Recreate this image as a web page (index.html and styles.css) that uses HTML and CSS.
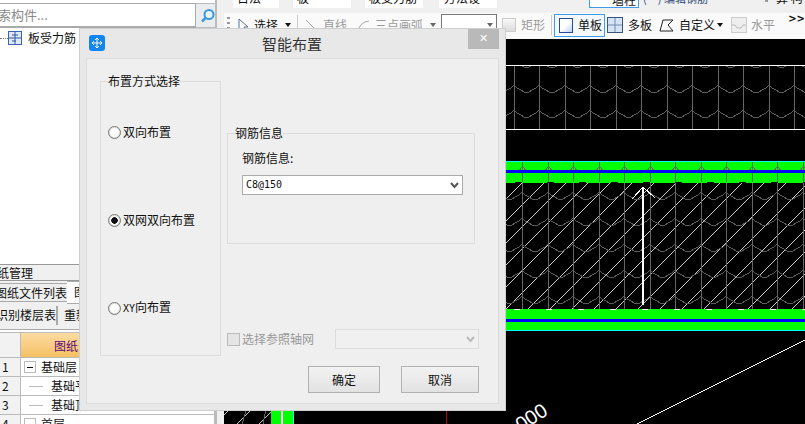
FILE: index.html
```html
<!DOCTYPE html>
<html lang="zh-CN">
  <head>
    <meta charset="UTF-8" />
    <title>智能布置</title>
    <link rel="stylesheet" href="styles.css">
  </head>
  <body>
    <div class="app">
      <!-- left panel -->
      <aside class="side">
        <div class="search">
          <div class="search-box"><span>索构件...</span></div>
          <div class="search-btn">
            <svg width="18" height="18" viewBox="0 0 18 18"><circle cx="10" cy="7.5" r="4.5" fill="#e8f4fc" stroke="#3f97d8" stroke-width="2"/><path d="M6.5 11 3 14.5" stroke="#3f97d8" stroke-width="2.5"/></svg>
          </div>
        </div>
        <div class="tree">
          <div class="tree-row">
            <span class="dots"></span>
            <svg width="14" height="14" viewBox="0 0 14 14"><rect x=".5" y=".5" width="13" height="13" fill="#dfe9f7" stroke="#3a62b0"/><path d="M7 1v12M1 7h12M4 4h6M4 10h4" stroke="#2d55a8" fill="none"/></svg>
            <span>板受力筋</span>
          </div>
        </div>
        <div class="panel-title"><span>纸管理</span></div>
        <div class="tabs">
          <div class="tab"><span>图纸文件列表</span></div>
          <div class="tab tab-on">图纸</div>
        </div>
        <div class="actions">
          <div class="action a-first"><span>识别楼层表</span></div>
          <div class="action">重新</div>
        </div>
        <div class="sheet">
          <div class="sheet-row sheet-head"><div class="num"></div><div class="cell">图纸</div></div>
          <div class="sheet-row"><div class="num">1</div><div class="cell"><i class="box"></i>基础层</div></div>
          <div class="sheet-row"><div class="num">2</div><div class="cell sub">基础平</div></div>
          <div class="sheet-row"><div class="num">3</div><div class="cell sub">基础顶</div></div>
          <div class="sheet-row"><div class="num">4</div><div class="cell"><i class="box"></i>首层</div></div>
        </div>
      </aside>
      <div class="splitter"></div>

      <main class="work">
        <div class="bar-top">
          <div class="combo"><span>日法</span></div>
          <div class="combo c2"><span>板</span></div>
          <div class="combo c2"><span>板受力筋</span></div>
          <div class="combo c3"><span>方法设</span></div>
          <div class="wall">墙柱</div>
          <div class="edit">(·) 编辑钢筋</div>
          <div class="grip"></div>
          <div class="calc">算 构</div>
        </div>
        <div class="bar-tools">
          <div class="grip"></div>
          <svg class="t-pick" width="11" height="15" viewBox="0 0 11 15"><path d="M1 1v12l3-3 2 4 2-1-2-4h4z" fill="#fff" stroke="#5a6f96"/></svg>
          <span class="t-sel">选择</span>
          <i class="caret"></i>
          <i class="sep s1"></i>
          <svg class="t-line" width="13" height="13" viewBox="0 0 13 13"><path d="M1 1l11 11" stroke="#aaa"/></svg>
          <span class="off t-gap">直线</span>
          <svg class="t-arc" width="13" height="13" viewBox="0 0 13 13"><path d="M1 12Q3 3 12 2" stroke="#aaa" fill="none"/></svg>
          <span class="off t-gap">三点画弧</span>
          <i class="caret off-c"></i>
          <div class="pick"><i class="caret off-d"></i></div>
          <i class="ico-rect"></i>
          <span class="off t-rect">矩形</span>
          <i class="sep s2"></i>
          <div class="slab-on">
            <i class="ico-slab"></i><span>单板</span>
          </div>
          <svg class="t-multi" width="16" height="16" viewBox="0 0 16 16"><rect x=".5" y=".5" width="15" height="15" fill="#d5e3f3" stroke="#38557f"/><path d="M8 1v14M1 8h14" stroke="#6f8db5"/></svg>
          <span class="t-gap">多板</span>
          <svg class="t-custom" width="15" height="13" viewBox="0 0 15 13"><path d="M1 12 4 1h10L9 6l5 6z" fill="none" stroke="#222"/></svg>
          <span class="t-gap">自定义</span>
          <i class="caret c-custom"></i>
          <svg class="t-flat" width="16" height="16" viewBox="0 0 16 16"><rect x=".5" y=".5" width="15" height="15" fill="#eee" stroke="#ccc"/><path d="M1 8h3l2 3h4l2-3h3" stroke="#bbb" fill="none"/></svg>
          <span class="off t-flat-text">水平</span>
          <span class="more">&gt;&gt;</span>
        </div>

        <svg class="cad" viewBox="224 39 581 385" shape-rendering="crispEdges">
          <defs>
            <pattern id="vTop" x="514" y="0" width="51" height="10" patternUnits="userSpaceOnUse"><path d="M.5 0v10M25.5 0v10" stroke="#666"/></pattern>
            <pattern id="scTop" x="514" y="80" width="51" height="25" patternUnits="userSpaceOnUse"><path d="M0 5l3 3 4 2 3 2h5l3-2 4-2 3-3 3 3 4 2 3 2h6l3-2 4-2 3-3" fill="none" stroke="#5c5c5c"/></pattern>
            <pattern id="vMid" x="522" y="0" width="51" height="10" patternUnits="userSpaceOnUse"><path d="M.5 0v10M26.5 0v10" stroke="#666"/></pattern>
            <pattern id="scMid" x="522" y="187" width="51" height="26" patternUnits="userSpaceOnUse"><path d="M0 5l3 3 4 2 3 2h6l3-2 4-2 3-3 3 3 4 2 3 2h5l3-2 4-2 3-3" fill="none" stroke="#5c5c5c"/></pattern>
            <pattern id="hatch" x="236" y="183" width="22" height="22" patternUnits="userSpaceOnUse"><path d="M0 22 22 0" stroke="#ccc"/></pattern>
            <pattern id="mark" x="516" y="162" width="51" height="20" patternUnits="userSpaceOnUse"><path d="M6.5 0v20M32.5 0v20M1.5 11 6.5 4 11.5 11M27.5 11 32.5 4 37.5 11" fill="none" stroke="#666"/></pattern>
            <pattern id="dashW" x="514" y="0" width="32" height="2" patternUnits="userSpaceOnUse"><rect width="6" height="2" fill="#fff"/></pattern>
            <pattern id="dashK" x="515" y="0" width="32" height="2" patternUnits="userSpaceOnUse"><rect width="7" height="2" fill="#000"/></pattern>
          </defs>
          <rect x="224" y="39" width="581" height="385" fill="#000"/>

          <!-- tile band -->
          <rect x="224" y="66" width="581" height="63" fill="url(#vTop)"/>
          <rect x="224" y="66" width="581" height="63" fill="url(#scTop)"/>
          <path d="M224 65.5H805M224 129.5H805" stroke="#fff"/>

          <!-- beam top -->
          <rect x="224" y="161" width="581" height="1" fill="#0ff"/>
          <rect x="224" y="162" width="581" height="21" fill="#0f0"/>
          <rect x="224" y="162" width="581" height="20" fill="url(#mark)"/>
          <rect x="224" y="170" width="581" height="3" fill="#00f"/>
          <rect x="224" y="182" width="581" height="1" fill="url(#dashK)"/>

          <!-- hatched slab -->
          <rect x="224" y="183" width="581" height="126" fill="url(#hatch)"/>
          <rect x="224" y="183" width="581" height="126" fill="url(#vMid)"/>
          <rect x="224" y="183" width="581" height="126" fill="url(#scMid)"/>
          <path d="M643 187V305" stroke="#fff" stroke-width="2"/>
          <path d="M643 187 632 199M643 187 655 198" stroke="#fff" fill="none"/>

          <!-- beam bottom -->
          <rect x="224" y="309" width="581" height="21" fill="#0f0"/>
          <rect x="224" y="309" width="581" height="1" fill="url(#dashW)"/>
          <rect x="224" y="319" width="581" height="3" fill="#00f"/>
          <rect x="224" y="330" width="581" height="1" fill="#0ff"/>

          <!-- lower part, mostly behind the dialog -->
          <rect x="224" y="405" width="47" height="19" fill="url(#hatch)"/>
          <path d="M245 405v9l-3 10M265 405v9l-2 10" fill="none" stroke="#666"/>
          <rect x="271" y="405" width="10" height="19" fill="#0f0"/>
          <rect x="281" y="405" width="2" height="19" fill="#fff"/>
          <rect x="283" y="405" width="10" height="19" fill="#0f0"/>
          <rect x="293" y="405" width="1" height="19" fill="#0ff"/>
          <path d="M446.500 405V424" stroke="#a01010"/>
          <path d="M805 340 637 424" stroke="#fff"/>
          <text x="521" y="432" transform="rotate(-33 521 432)" class="dim" shape-rendering="auto">000</text>
        </svg>
      </main>

      <!-- dialog -->
      <section class="dialog">
        <header class="dialog-head">
          <svg class="dialog-ico" width="16" height="16" viewBox="0 0 16 16"><rect width="16" height="16" rx="3" fill="#1186f0"/><path d="M8 3v10M3 8h10M6 5l2-2 2 2M6 11l2 2 2-2M5 6 3 8l2 2M11 6l2 2-2 2" stroke="#fff" fill="none"/></svg>
          <h1>智能布置</h1>
          <button class="close">✕</button>
        </header>
        <div class="dialog-body">
          <div class="columns">
            <fieldset class="group mode">
              <legend>布置方式选择</legend>
              <label class="radio"><input type="radio" name="mode" /><span>双向布置</span></label>
              <label class="radio"><input type="radio" name="mode" checked /><span>双网双向布置</span></label>
              <label class="radio"><input type="radio" name="mode" /><span><b class="latin">XY</b>向布置</span></label>
            </fieldset>
            <div class="right">
              <fieldset class="group info">
                <legend>钢筋信息</legend>
                <div class="field-label">钢筋信息:</div>
                <div class="select">
                  <span class="latin">C8@150</span>
                  <svg width="9" height="7" viewBox="0 0 9 7"><path d="M1 1l3.500 4L8 1" fill="none" stroke="#555" stroke-width="2"/></svg>
                </div>
              </fieldset>
              <div class="ref">
                <label class="check"><input type="checkbox" disabled /><span>选择参照轴网</span></label>
                <div class="select select-off">
                  <svg width="9" height="7" viewBox="0 0 9 7"><path d="M1 1l3.500 4L8 1" fill="none" stroke="#bbb" stroke-width="2"/></svg>
                </div>
              </div>
            </div>
          </div>
          <div class="buttons">
            <button class="btn">确定</button>
            <button class="btn">取消</button>
          </div>
        </div>
      </section>
    </div>
  </body>
</html>
```

FILE: styles.css
```css
* {
  box-sizing: border-box;
}
html,
body {
  margin: 0;
  height: 100%;
  overflow: hidden;
}
body {
  font-family: "Noto Sans CJK SC", "Liberation Sans", sans-serif;
  font-size: 12px;
  line-height: 14px;
  color: #111;
  background: #f0f0f0;
}
.app {
  position: relative;
  display: flex;
  width: 805px;
  height: 424px;
  overflow: hidden;
}

/* ---------- left panel ---------- */
.side {
  width: 215px;
  flex: none;
  display: flex;
  flex-direction: column;
  background: #fff;
}
.search {
  display: flex;
  width: 221px;
  height: 25px;
  margin-top: 3px;
  flex: none;
}
.search-box {
  width: 196px;
  border: 1px solid #aaa;
  border-width: 1px 1px 2px 0;
  background: #fff;
  color: #8a8a8a;
  font-size: 13px;
  line-height: 21px;
  overflow: hidden;
  white-space: nowrap;
}
.search-box span {
  margin-left: -2px;
}
.search-btn {
  width: 25px;
  display: flex;
  align-items: center;
  justify-content: center;
  background: #e9edf0;
  border: 1px solid #bbb;
  border-left: 0;
}
.tree {
  flex: 1;
  padding-top: 2px;
}
.tree-row {
  display: flex;
  align-items: center;
  height: 16px;
}
.tree-row svg {
  margin-right: 6px;
}
.dots {
  width: 8px;
  border-top: 1px dotted #777;
}
.panel-title {
  height: 16px;
  flex: none;
  border-top: 1px solid #999;
  background: #f0f0f0;
  overflow: hidden;
  white-space: nowrap;
  font-size: 12px;
  line-height: 15px;
}
.panel-title span {
  margin-left: -3px;
}
.tabs {
  display: flex;
  align-items: flex-end;
  height: 24px;
  flex: none;
  background: #f0f0f0;
  border-top: 1px solid #999;
}
.tab {
  width: 68px;
  height: 19px;
  margin-bottom: 2px;
  border: 1px solid #aaa;
  border-left: 0;
  overflow: hidden;
  white-space: nowrap;
  direction: rtl;
  text-align: left;
  line-height: 17px;
  background: #eee;
}
.tab-on {
  direction: ltr;
  height: 23px;
  margin: 0 0 0 -1px;
  padding-left: 7px;
  line-height: 20px;
  background: #fff;
  flex: 1;
}
.actions {
  display: flex;
  height: 26px;
  flex: none;
  padding: 2px 0 4px;
  background: #f0f0f0;
  border-bottom: 1px solid #aaa;
}
.action {
  padding: 0 6px;
  border-right: 2px solid #aaa;
  line-height: 18px;
  white-space: nowrap;
  overflow: hidden;
}
.a-first {
  width: 58px;
  padding: 0;
  direction: rtl;
}
.sheet {
  height: 92px;
  margin-top: 2px;
  flex: none;
  overflow: hidden;
  border-top: 1px solid #bbb;
}
.sheet-row {
  display: flex;
  height: 19px;
  border-bottom: 1px solid #bbb;
  line-height: 18px;
}
.sheet-head {
  height: 25px;
  line-height: 25px;
}
.num {
  width: 21px;
  padding-left: 2px;
  background: #f2f2f2;
  border-right: 1px solid #bbb;
}
.cell {
  flex: 1;
  display: flex;
  align-items: center;
  padding-left: 3px;
  border-right: 1px solid #bbb;
}
.sheet-head .cell {
  padding-left: 33px;
  color: #5b0a7a;
  background: linear-gradient(#fbdca3, #f4c061);
}
.sub {
  padding-left: 30px;
  border-left: 0;
  background: linear-gradient(#bbb, #bbb) 8px 9px / 14px 1px no-repeat;
}
.box {
  width: 12px;
  height: 12px;
  margin-right: 5px;
  border: 1px solid #bbb;
  background: linear-gradient(#111, #111) center / 6px 1px no-repeat;
}
.splitter {
  width: 9px;
  flex: none;
  background: #f0f0f0;
  border-left: 2px solid #bbb;
}

/* ---------- toolbars + drawing ---------- */
.work {
  flex: 1;
  min-width: 0;
  display: flex;
  flex-direction: column;
}
.bar-top {
  display: flex;
  align-items: flex-start;
  height: 13px;
  flex: none;
  overflow: hidden;
  padding-left: 9px;
  gap: 2px;
  background: #f0f0f0;
  white-space: nowrap;
}
.bar-top > div {
  margin-top: -9px;
}
.combo {
  width: 58px;
  height: 17px;
  padding-left: 4px;
  background: linear-gradient(#f0f0f0, #f0f0f0) right / 12px 100% no-repeat #fff;
}
.c2 {
  width: 70px;
}
.c3 {
  width: 70px;
  margin-left: 2px;
  padding-left: 5px;
}
.bar-top .wall {
  width: 50px;
  height: 17px;
  margin-top: -9px;
  margin-left: 78px;
  padding-left: 22px;
  padding-top: 1px;
  border: 1px solid #3f9bf0;
  background: #fff;
}
.bar-top .edit {
  width: 120px;
  margin-left: 2px;
  color: #34507c;
  font-size: 11px;
}
.bar-top .calc {
  margin-left: 6px;
}
.bar-top .grip {
  margin-top: 0;
  height: 5px;
}
.grip {
  width: 3px;
  height: 16px;
  flex: none;
  background: repeating-linear-gradient(#999 0 2px, transparent 2px 5px);
}
.bar-tools {
  display: flex;
  align-items: center;
  height: 26px;
  flex: none;
  padding: 0 0 2px 3px;
  background: #fafafa;
  white-space: nowrap;
  position: relative;
  color: #111;
}
.bar-tools > * {
  flex: none;
}
.off {
  color: #999;
}
.t-pick {
  margin-left: 8px;
}
.t-sel {
  margin-left: 5px;
}
.caret {
  width: 0;
  height: 0;
  border: 3px solid transparent;
  border-top: 4px solid #111;
  border-bottom: 0;
  margin-left: 7px;
}
.sep {
  width: 1px;
  height: 20px;
  background: #ccc;
}
.s1 {
  margin-left: 6px;
}
.s2 {
  margin-left: 6px;
}
.t-line {
  margin-left: 7px;
}
.t-gap {
  margin-left: 5px;
}
.t-arc {
  margin-left: 10px;
}
.off-c {
  border-top-color: #666;
  margin-left: 7px;
}
.pick {
  width: 56px;
  height: 22px;
  margin-left: 5px;
  border: 1px solid #777;
  background: #fff;
  display: flex;
  align-items: center;
  justify-content: flex-end;
  padding-right: 3px;
}
.off-d {
  border-top-color: #666;
}
.ico-rect {
  width: 14px;
  height: 14px;
  margin-left: 5px;
  border: 1px solid #ccc;
  background: linear-gradient(#f7f7f7, #ddd);
}
.t-rect {
  margin-left: 5px;
}
.slab-on {
  display: flex;
  align-items: center;
  width: 51px;
  height: 23px;
  margin-left: 2px;
  padding-left: 4px;
  gap: 5px;
  border: 1px solid #3f9bf0;
  background: #f4f9fe;
}
.ico-slab {
  width: 14px;
  height: 15px;
  border: 1px solid #2c4a9a;
  background: linear-gradient(135deg, #fff 50%, #bcd0ee);
}
.t-multi {
  margin-left: 2px;
}
.t-custom {
  margin-left: 7px;
}
.c-custom {
  margin-left: 2px;
}
.t-flat {
  margin-left: 8px;
}
.t-flat-text {
  margin-left: 4px;
}
.more {
  position: absolute;
  right: 0;
  top: 0;
  font: bold 10px/12px "DejaVu Sans", sans-serif;
}
.cad {
  display: block;
  width: 581px;
  height: 385px;
  flex: none;
}
.dim {
  fill: #fff;
  font: 20px "Liberation Sans", sans-serif;
}

/* ---------- dialog ---------- */
.dialog {
  position: absolute;
  left: 79px;
  top: 28px;
  width: 427px;
  height: 383px;
  display: flex;
  flex-direction: column;
  background: #e8e8e8;
  border: 1px solid #cfcfcf;
}
.dialog-head {
  position: relative;
  display: flex;
  align-items: center;
  justify-content: center;
  height: 29px;
  flex: none;
}
.dialog-head h1 {
  margin: 0 0 0 -1px;
  font-size: 15px;
  font-weight: 400;
  line-height: 20px;
  color: #333;
}
.dialog-ico {
  position: absolute;
  left: 9px;
  top: 6px;
}
.close {
  position: absolute;
  right: 6px;
  top: 0;
  width: 31px;
  height: 20px;
  padding: 0;
  border: 0;
  background: #b9b9b9;
  color: #fff;
  font: 700 11px/20px "DejaVu Sans", sans-serif;
}
.dialog-body {
  margin: 0 6px 6px;
  flex: 1;
  display: flex;
  flex-direction: column;
  padding: 15px 19px 0 13px;
  background: #efefef;
  border: 1px solid #dcdcdc;
}
.columns {
  display: flex;
  gap: 6px;
  height: 282px;
  flex: none;
}
.group {
  margin: 0;
  padding: 0;
  border: 1px solid #dcdcdc;
  min-width: 0;
}
.group legend {
  padding: 0;
  line-height: 14px;
}
.mode {
  width: 121px;
  flex: none;
  padding: 37px 0 0 7px;
  display: flex;
  flex-direction: column;
  gap: 74px;
}
.radio,
.check {
  display: flex;
  align-items: center;
  height: 14px;
}
.radio input {
  appearance: none;
  width: 13px;
  height: 13px;
  margin: 0 2px 0 0;
  border: 1px solid #777;
  border-radius: 50%;
  background: #fff;
  box-shadow: inset 0 0 0 1px #ddd;
}
.radio input:checked {
  background: radial-gradient(circle, #111 0 3px, #fff 3.500px);
}
.latin {
  font-family: "DejaVu Sans Mono", monospace;
  font-size: 10px;
  font-weight: 400;
}
.right {
  flex: 1;
  min-width: 0;
  display: flex;
  flex-direction: column;
  justify-content: space-between;
  padding: 52px 0 7px;
}
.info {
  width: 248px;
  height: 118px;
  padding: 9px 11px 0 14px;
}
.info legend {
  margin-left: -7px;
}
.field-label {
  line-height: 18px;
  margin-bottom: 8px;
}
.select {
  display: flex;
  align-items: center;
  justify-content: space-between;
  height: 20px;
  padding: 0 3px;
  border: 1px solid #aaa;
  background: #fff;
}
.ref {
  display: flex;
  align-items: center;
  height: 20px;
}
.check {
  width: 108px;
  color: #999;
}
.check input {
  appearance: none;
  width: 13px;
  height: 13px;
  margin: 0 2px 0 0;
  border: 1px solid #bbb;
  background: #e4e4e4;
}
.select-off {
  width: 144px;
  justify-content: flex-end;
  border-color: #dcdcdc;
  background: #f0f0f0;
}
.buttons {
  display: flex;
  justify-content: flex-end;
  gap: 21px;
  margin-top: 10px;
}
.btn {
  width: 72px;
  height: 27px;
  padding: 0;
  border: 1px solid #b2b2b2;
  background: linear-gradient(#f2f2f2, #e2e2e2);
  color: #111;
  font: inherit;
}
.btn + .btn {
  width: 78px;
}
```
